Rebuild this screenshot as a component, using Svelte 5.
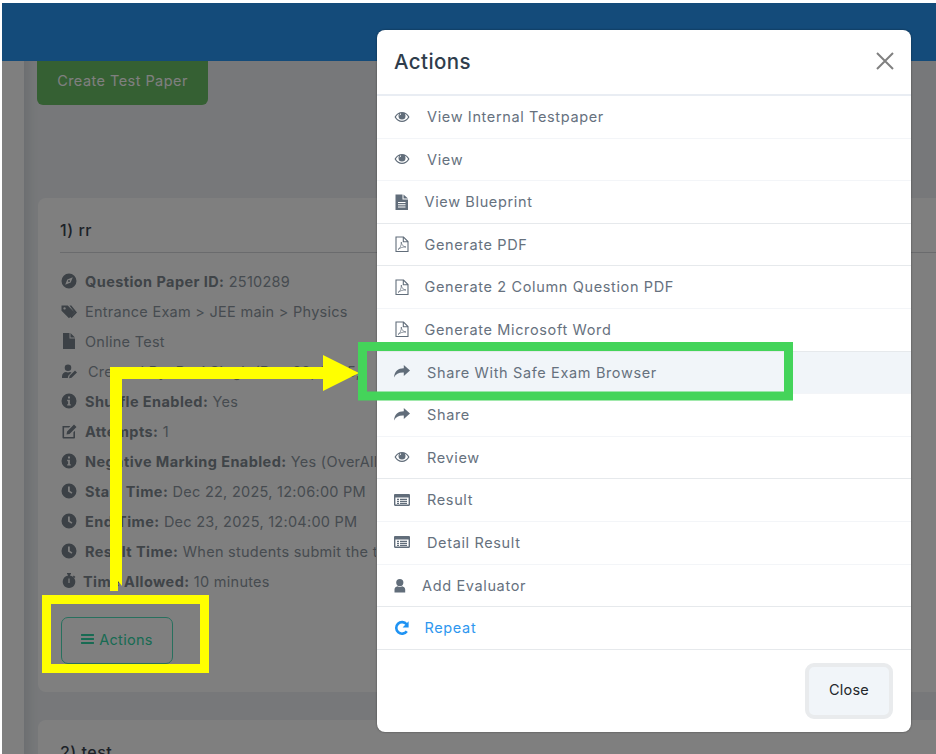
<script lang="ts">
  const icons: Record<string, string> = {
    eye: 'M.5 8C2.5 4.600 5 3 8 3s5.500 1.600 7.500 5c-2 3.400-4.500 5-7.500 5S2.500 11.400.5 8zM1.900 8c1.500 2.500 3.600 3.800 6.100 3.800S12.600 10.500 14.100 8c-.9-1.500-2-2.600-3.300-3.200.5.600.7 1.300.7 2.100a3.500 3.500 0 1 1-7 0c0-.8.2-1.500.7-2.100C3.900 5.400 2.800 6.500 1.900 8zM6.500 4.600a.6.6 0 0 0-.6.6c0 .9-.4 1.100-.2 1.900.2-1 .6-1.500 1.300-1.700.3-.2.2-.8-.5-.8z',
    file: 'M1.500.5H8.500V5.500H14V16H1.500zM9.500.5l4.500 4H9.500zM4 8v1h7.500V8zM4 10.200v1h7.500v-1zM4 12.400v1h7.500v-1z',
    plainfile: 'M2 0H8.500V5.500H14V16H2zM9.500 0L14 4.500H9.500z',
    share: 'M16 6.500L9.800 1v3.200C4 4.200.6 7 0 13.500c1.800-3.700 4.800-5.200 9.800-5V12z',
    list: 'M1.200 2h13.600C15.500 2 16 2.500 16 3.200v9.600c0 .7-.5 1.200-1.200 1.200H1.200C.5 14 0 13.500 0 12.800V3.200C0 2.500.5 2 1.200 2zM1.400 5.400v7.200h13.200V5.400zM3 6.700h2V8H3zM6 6.700h7V8H6zM3 8.800h2v1.200H3zM6 8.800h7v1.200H6zM3 10.800h2V12H3zM6 10.800h7V12H6z',
    user: 'M5.800 2a3.500 3.500 0 0 1 0 7.200 3.500 3.500 0 0 1 0-7.200zM.5 15.500v-3C.5 10.700 2 9.700 3.500 9.300c1.300 1 3.300 1 4.600 0 1.500.4 3.100 1.400 3.100 3.200v3z',
    compass: 'M8 .5a7.500 7.500 0 1 1 0 15 7.500 7.500 0 0 1 0-15zM11.800 4.200L6.300 6.500 4.200 11.800 9.700 9.500zM8 7a1 1 0 1 1 0 2 1 1 0 0 1 0-2z',
    tags: 'M.5 2.500h6.200l7 7-5.700 5.700-7.500-7.400zM3.500 4.200a1.200 1.200 0 1 0 .1 0zM8.500 2.500h1.800l5.700 7-5.500 5.700-1.200-1.100 4.200-4.600z',
    userpen: 'M7 1.500a3.300 3.300 0 0 1 0 6.600 3.300 3.300 0 0 1 0-6.600zM1 15v-1.800C1 10.700 3 9 5 9c1.300.5 2.700.5 4 0l1.500.4-3.200 3.300-.5 2.300zM14 7.500l2 1.900-5.400 5.300-2.500.5.500-2.400z',
    info: 'M8 .5a7.500 7.500 0 1 1 0 15 7.500 7.500 0 0 1 0-15zM7 3.500v2h2v-2zM6.200 6.800v1.400h.9v3H6.200v1.300h3.600v-1.300h-.9V6.800z',
    edit: 'M1.500 3h8L8 4.600H3.100v9.300h9.300V9.300L14 7.800v6.600c0 .6-.5 1.100-1.100 1.100H2.600c-.6 0-1.100-.5-1.100-1.100zM13 1.500l2.500 2.400-7 7-3 .6.600-3z',
    clock: 'M8 .5a7.500 7.500 0 1 1 0 15 7.500 7.500 0 0 1 0-15zM7 3.500V8.500l3.500 2.300.9-1.300L8.800 7.700V3.500z',
    watch: 'M6 0h4v1.500H9v1.100A6.300 6.300 0 1 1 7 2.600V1.500H6zM7.400 5.500v4.400h1.200V5.500zM12.800 2.600l1.600 1.500-.9 1-1.600-1.500z'
  };

  const actions = [
    { icon: 'eye', label: 'View Internal Testpaper', lead: 'wide' },
    { icon: 'eye', label: 'View', lead: 'wide' },
    { icon: 'file', label: 'View Blueprint', lead: 'mid', end: true },
    { icon: 'pdf', label: 'Generate PDF', lead: 'mid', end: true },
    { icon: 'pdf', label: 'Generate 2 Column Question PDF', lead: 'mid' },
    { icon: 'pdf', label: 'Generate Microsoft Word', lead: 'mid', end: true },
    { icon: 'share', label: 'Share With Safe Exam Browser', lead: 'wide', active: true },
    { icon: 'share', label: 'Share', lead: 'wide' },
    { icon: 'eye', label: 'Review', lead: 'wide', end: true },
    { icon: 'list', label: 'Result', lead: 'wide' },
    { icon: 'list', label: 'Detail Result', lead: 'wide' },
    { icon: 'user', label: 'Add Evaluator', lead: 'tight', end: true },
    { icon: 'repeat', label: 'Repeat', lead: 'mid', link: true, end: true }
  ];

  const details = [
    { icon: 'compass', key: 'Question Paper ID:', value: '2510289' },
    { icon: 'tags', value: 'Entrance Exam > JEE main > Physics' },
    { icon: 'plainfile', value: 'Online Test' },
    { icon: 'userpen', value: 'Created By: Ravi Singh (Dec 22, 2025,', wide: true },
    { icon: 'info', key: 'Shuffle Enabled:', value: 'Yes' },
    { icon: 'edit', key: 'Attempts:', value: '1' },
    { icon: 'info', key: 'Negative Marking Enabled:', value: 'Yes (OverAll' },
    { icon: 'clock', key: 'Start Time:', value: 'Dec 22, 2025, 12:06:00 PM' },
    { icon: 'clock', key: 'End Time:', value: 'Dec 23, 2025, 12:04:00 PM' },
    { icon: 'clock', key: 'Result Time:', value: 'When students submit the test' },
    { icon: 'watch', key: 'Time Allowed:', value: '10 minutes', narrow: true }
  ];
</script>

<div class="shell">
  <div class="page">
    <header class="navbar"></header>
    <div class="body-row">
      <aside class="rail"></aside>
      <main class="content">
        <button class="create">Create Test Paper</button>

        <section class="card first">
          <h3>1) rr</h3>
          <ul class="details">
            {#each details as d}
              <li>
                <span class="d-lead" class:wide={d.wide} class:narrow={d.narrow}>
                  <svg class="d-icon" viewBox="0 0 16 16"><path fill-rule="evenodd" d={icons[d.icon]} /></svg>
                </span>
                <span class="d-text">{#if d.key}<strong>{d.key}</strong>{' '}{/if}{d.value}</span>
              </li>
            {/each}
          </ul>
          <button class="actions-btn">
            <svg viewBox="0 0 14 12" width="13" height="11"><path d="M0 0h14v2.200H0zM0 4.400h14v2.200H0zM0 8.800h14V11H0z" /></svg>
            Actions
          </button>
        </section>

        <section class="card">
          <h3>2) test</h3>
        </section>
      </main>
    </div>

    <div class="backdrop">
      <div class="modal">
        <div class="modal-head">
          <h2>Actions</h2>
          <svg class="x" viewBox="0 0 18 18" width="18" height="18"><path d="M1 1l16 16M17 1L1 17" /></svg>
        </div>
        <div class="modal-list">
          {#each actions as a}
            <div class="row" class:end={a.end} class:active={a.active} class:link={a.link}>
              <span class="lead {a.lead}">
                <svg class="icon" viewBox="0 0 16 16">
                  {#if a.icon === 'pdf'}
                    <path class="outline" d="M2 1h7.500L14 5.500V15.500H2zM9.300 1v4.700H14" />
                    <path class="thin" d="M4 13.500c2-1 3.500-4 3.300-7.500.2 3 1.800 4.500 4.700 5-3-.2-5.600.6-8 2.500z" />
                  {:else if a.icon === 'repeat'}
                    <path class="arc" d="M12.800 11.200A5.800 5.800 0 1 1 12.600 4.300" />
                    <path d="M14.600 1.200V7.400H8.600z" />
                  {:else}
                    <path fill-rule="evenodd" d={icons[a.icon]} />
                  {/if}
                </svg>
              </span>
              <span>{a.label}</span>
            </div>
          {/each}
        </div>
        <div class="modal-foot">
          <button class="close">Close</button>
        </div>
      </div>
    </div>
  </div>

  <!-- callouts drawn on top of the screenshot -->
  <svg class="callouts" viewBox="0 0 936 754" width="936" height="754">
    <polygon class="yellow" points="110,591 110,367 323,367 323,355 359,373 323,391 323,379 122,379 122,586 118,581 118,591" />
    <rect class="box-yellow" x="46.500" y="599.500" width="158" height="69" />
    <rect class="box-green" x="362.500" y="346.500" width="426" height="49.500" />
  </svg>
</div>

<style>
  :global(body) {
    margin: 0;
    background: #fff;
  }

  .shell {
    height: 754px;
    box-sizing: border-box;
    padding: 3px 0 0 2px;
    overflow: hidden;
    font-family: Inter, "Liberation Sans", sans-serif;
    position: relative;
  }

  .page {
    position: relative;
    height: 751px;
    overflow: hidden;
    background: #eef1f4;
    display: flex;
    flex-direction: column;
  }

  .navbar {
    flex: none;
    height: 58px;
    background: #2896f5;
  }

  .body-row {
    flex: 1;
    display: flex;
    min-height: 0;
  }

  .rail {
    flex: none;
    width: 22px;
    background: #fff;
  }

  .content {
    flex: 1;
    min-width: 0;
    padding-left: 14px;
    box-shadow: inset 14px 0 12px -10px rgba(20, 40, 60, 0.12);
  }

  .create {
    display: block;
    width: 171px;
    height: 44px;
    margin-left: -1px;
    padding: 0 0 6px;
    border: 0;
    border-radius: 0 0 6px 6px;
    background: #6ac066;
    color: #fff;
    font: 400 14.500px Inter, sans-serif;
    letter-spacing: 0.45px;
  }

  .card {
    background: #fff;
    border-radius: 8px 0 0 8px;
    padding: 22px 0 28px 22px;
    margin-top: 28px;
  }

  .card.first {
    margin-top: 93px;
  }

  .card h3 {
    margin: 0;
    padding-bottom: 12px;
    border-bottom: 1px solid #d4d7da;
    font-size: 16px;
    font-weight: 500;
    line-height: 20px;
    letter-spacing: 0.5px;
    color: #3a4450;
  }

  .details {
    list-style: none;
    width: 315px;
    overflow: hidden;
    margin: 13px 0 21px;
    padding: 0 0 0 1px;
  }

  .details li {
    display: flex;
    align-items: center;
    height: 30px;
    white-space: nowrap;
    font-size: 14.500px;
    letter-spacing: 0.27px;
    color: #8d97a1;
  }

  .details strong {
    font-weight: 700;
    letter-spacing: 0.42px;
    color: #7f8890;
  }

  .d-lead {
    flex: none;
    width: 24px;
    display: flex;
  }

  .d-lead.wide {
    width: 27px;
  }

  .d-lead.narrow {
    width: 22px;
  }

  .d-icon {
    width: 16px;
    height: 16px;
    fill: #78838d;
  }

  .actions-btn {
    display: flex;
    align-items: center;
    justify-content: center;
    gap: 5px;
    width: 112px;
    height: 47px;
    margin-left: 1px;
    padding: 0 0 2px;
    border: 1px solid #50e0bc;
    border-radius: 7px;
    background: transparent;
    color: #30d6a6;
    font: 400 14.500px Inter, sans-serif;
    letter-spacing: 0.3px;
  }

  .actions-btn svg {
    fill: currentColor;
  }

  .backdrop {
    position: absolute;
    inset: 0;
    background: rgba(0, 0, 0, 0.5);
    padding: 27px 0 0 375px;
  }

  .modal {
    width: 534px;
    height: 702px;
    background: #fff;
    border-radius: 8px;
    box-shadow: 0 0 2px rgba(0, 0, 0, 0.5);
    display: flex;
    flex-direction: column;
    overflow: hidden;
  }

  .modal-head {
    flex: none;
    display: flex;
    align-items: center;
    justify-content: space-between;
    padding: 0 17px 2px;
    height: 62px;
    border-bottom: 2px solid #e9edf3;
  }

  .modal-head h2 {
    margin: 0;
    font-size: 20.500px;
    font-weight: 500;
    letter-spacing: 0.4px;
    color: #2f3d4c;
  }

  .x {
    fill: none;
    stroke: #808080;
    stroke-width: 2;
  }

  .row {
    display: flex;
    align-items: center;
    padding: 0 0 0.600px 17px;
    height: 41px;
    border-bottom: 1px solid #f3f5f8;
    font-size: 14.500px;
    letter-spacing: 0.64px;
    color: #66717e;
  }

  .row.end {
    border-bottom: 1px solid #e6e9ec;
  }

  .row.active {
    background: #f1f5f9;
  }

  .row.link {
    color: #2e97ef;
  }

  .lead {
    flex: none;
    display: flex;
  }

  .lead.wide {
    width: 33px;
  }

  .lead.mid {
    width: 30.500px;
  }

  .lead.tight {
    width: 28px;
  }

  .icon {
    width: 16px;
    height: 16px;
    fill: #616d7a;
  }

  .outline {
    fill: none;
    stroke: #616d7a;
    stroke-width: 1.100;
  }

  .thin {
    fill: none;
    stroke: #616d7a;
    stroke-width: 0.700;
  }

  .link .icon {
    fill: #1f93f3;
  }

  .arc {
    fill: none;
    stroke: #1f93f3;
    stroke-width: 2.600;
  }

  .modal-foot {
    flex: 1;
    display: flex;
    justify-content: flex-end;
    align-items: flex-start;
    padding: 13px 18px 0 0;
  }

  .close {
    width: 88px;
    height: 56px;
    padding: 0 0 2px;
    border: 4px solid #e9ebed;
    border-radius: 9px;
    background: #f1f5f9;
    color: #23272b;
    font: 400 14.500px Inter, sans-serif;
    letter-spacing: 0.2px;
  }

  .callouts {
    position: absolute;
    top: 0;
    left: 0;
    pointer-events: none;
  }

  .yellow {
    fill: #ffff00;
  }

  .box-yellow {
    fill: none;
    stroke: #ffff00;
    stroke-width: 9;
  }

  .box-green {
    fill: none;
    stroke: #44d45a;
    stroke-width: 9;
  }
</style>
